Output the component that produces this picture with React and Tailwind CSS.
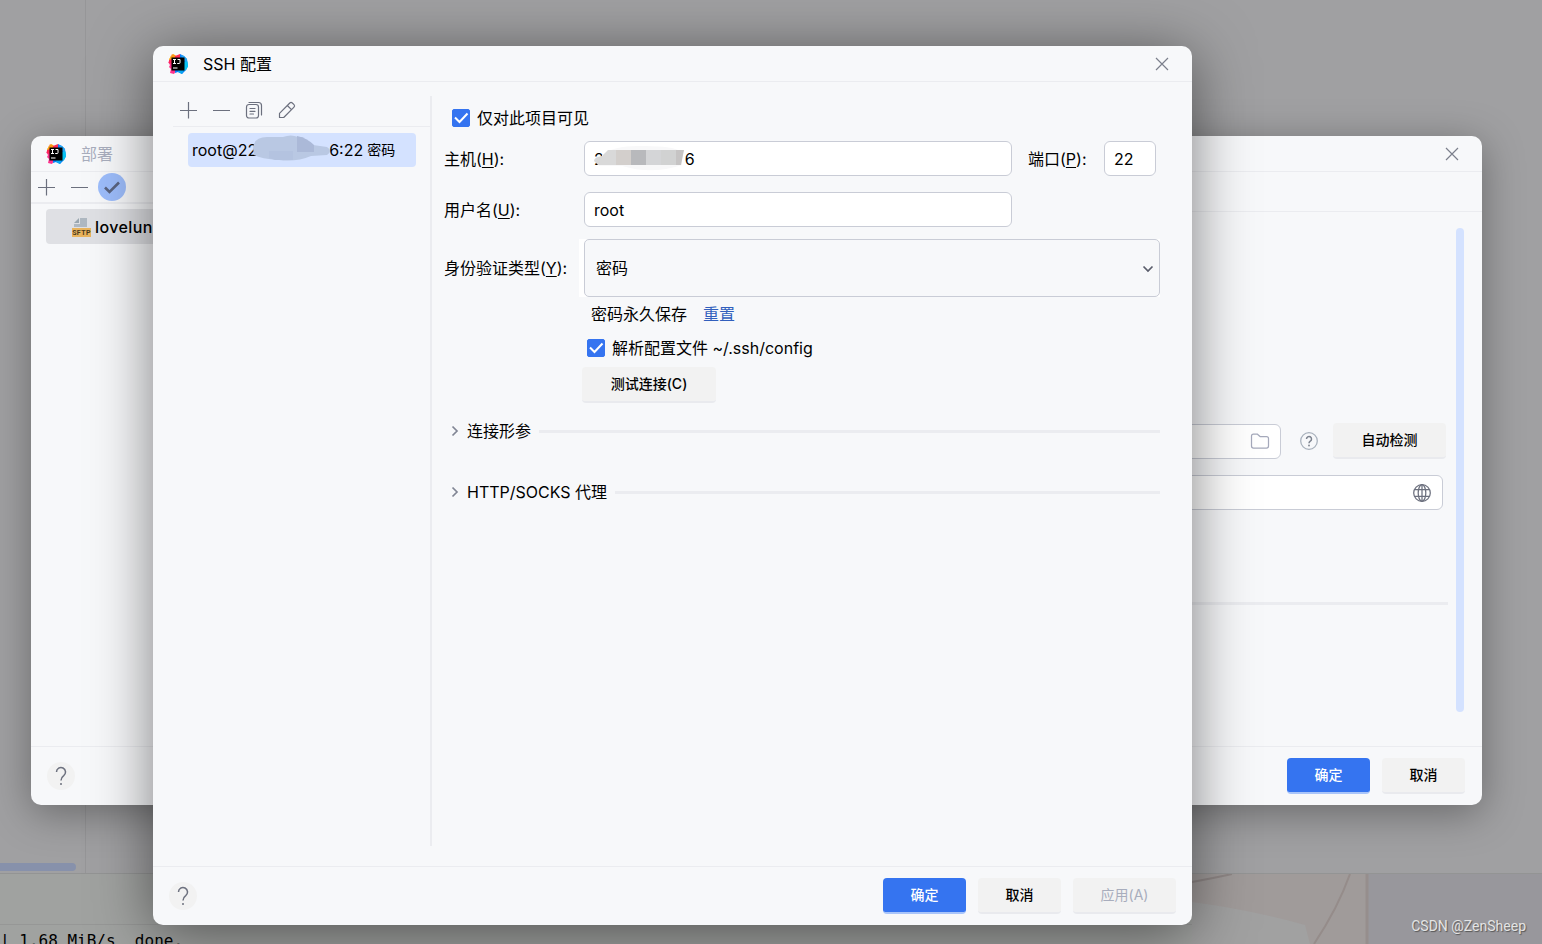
import { useState } from "react";

function IdeaLogo() {
  return (
    <svg viewBox="0 0 20 20" className="h-5 w-5 shrink-0">
      <path d="M1 5 5 0l5 3v6H2Z" fill="#fdb60d" />
      <path d="m4 0 3 1 1 3-4 3-2-4Z" fill="#fc801d" opacity=".6" />
      <path d="m7 2 5-2 2 4-3 3H7Z" fill="#fe2857" />
      <path d="m0 8 4-2 3 8 1 3-2 3-4-1 1-4-2-2 1-2Z" fill="#ff318c" />
      <path d="m1 6 3-1v5l-3-1Z" fill="#fe2857" />
      <path d="m12 0 4 2 3 3 1 7-2 4-4 4-4-2-3 1v-3l5-6Z" fill="#087cfa" />
      <path d="m13 1 3 1 3 3v4l-4-3Z" fill="#21a8f5" />
      <path d="m16 8 3.500-.500.500 5-2 3.500-2 1Z" fill="#07c3f2" />
      <path d="m10 15 6 1-2 4-4-2Z" fill="#07a8f2" />
      <path d="M3.500 3.500h13v13h-13Z" fill="#000" />
      <path d="M5 5.500h3M6.500 5.500v4M5 9.500h3M9.500 5.500h2.500v3.200q0 .8-.8.800H9.200" fill="none" stroke="#fff" />
      <path d="M5 13.500h4.500v1H5Z" fill="#fff" />
    </svg>
  );
}

function PlusIcon() {
  return (
    <svg viewBox="0 0 20 20" className="h-5 w-5" fill="none" stroke="#6c707e" strokeWidth="1.200">
      <path d="M10.500 2v16.500M2 10.500h17" />
    </svg>
  );
}

function MinusIcon() {
  return (
    <svg viewBox="0 0 20 20" className="h-5 w-5" fill="none" stroke="#6c707e" strokeWidth="1.200">
      <path d="M2 10.500h17" />
    </svg>
  );
}

function CopyIcon() {
  return (
    <svg viewBox="0 0 20 20" className="h-5 w-5" fill="none" stroke="#6c707e" strokeWidth="1.200" strokeLinecap="round">
      <rect x="2.500" y="4.500" width="12" height="13.500" rx="2.500" />
      <path d="M5 2.500h9.500a3 3 0 0 1 3 3V15M6 8.500h5M6 11.300h5M6 14h3.500" />
    </svg>
  );
}

function PencilIcon() {
  return (
    <svg viewBox="0 0 20 20" className="h-5 w-5" fill="none" stroke="#6c707e" strokeWidth="1.200" strokeLinejoin="round">
      <path d="M2.500 17.500v-4.200L12.800 3a1.800 1.800 0 0 1 2.500 0l1.700 1.700a1.800 1.800 0 0 1 0 2.500L6.700 17.500ZM10.300 5.500l4.200 4.200" />
    </svg>
  );
}

function CloseIcon() {
  return (
    <svg viewBox="0 0 20 20" className="h-5 w-5" fill="none" stroke="#7b7f8c" strokeWidth="1.200">
      <path d="m4 4 12 12M16 4 4 16" />
    </svg>
  );
}

function SftpIcon() {
  return (
    <svg viewBox="0 0 20 20" className="h-5 w-5 shrink-0">
      <path d="M9 1h7v9H3V7h6Z" fill="#afb8c1" />
      <path d="M8 1v5H3Z" fill="#9aa7b0" />
      <path d="M1 11h19v9H1Z" fill="#e9b35c" />
      <text x="10.500" y="18" fontSize="7" fontWeight="700" textAnchor="middle" fill="#4a3a1c" fontFamily="Roboto, sans-serif">
        SFTP
      </text>
    </svg>
  );
}

function FolderIcon() {
  return (
    <svg viewBox="0 0 20 20" className="h-5 w-5" fill="none" stroke="#a5a9bb" strokeWidth="1.250" strokeLinejoin="round">
      <path d="M1.500 15V5q0-2 2-2h3.700L10 5.500h6.500q2 0 2 2V15q0 2-2 2h-13q-2 0-2-2Z" />
    </svg>
  );
}

function GlobeIcon() {
  return (
    <svg viewBox="0 0 20 20" className="h-5 w-5" fill="none" stroke="#6c707e" strokeWidth="1.250">
      <circle cx="10" cy="10" r="8.300" />
      <ellipse cx="10" cy="10" rx="3.800" ry="8.300" />
      <path d="M10 1.700v16.600M2.500 6.700h15M2.500 13.300h15" />
    </svg>
  );
}

function HelpIcon() {
  return (
    <svg viewBox="0 0 20 20" className="h-5 w-5" fill="none" stroke="#a8b1bc" strokeWidth="1.250">
      <circle cx="10" cy="10" r="8.300" />
      <path d="M7.500 8a2.500 2.500 0 1 1 3.800 2.100Q10 11 10 12.200" stroke="#7d838f" strokeWidth="1.500" />
      <circle cx="10" cy="14.500" r=".9" fill="#7d838f" stroke="none" />
    </svg>
  );
}

function ChevronIcon({ className }) {
  return (
    <svg viewBox="0 0 12 12" className={className} fill="none" strokeWidth="1.700">
      <path d="m3.500 1.500 4.500 4.500-4.500 4.500" />
    </svg>
  );
}

function IconButton({ label, children }) {
  return (
    <button type="button" aria-label={label} className="flex h-5 w-5 items-center justify-center">
      {children}
    </button>
  );
}

function HelpButton() {
  return (
    <button type="button" aria-label="帮助" className="flex h-7 w-7 items-center justify-center rounded-full bg-[#f2f2f2]">
      <svg viewBox="0 0 20 20" className="h-5 w-5" fill="none" stroke="#6c707e" strokeWidth="1.500">
        <path d="M5.500 6a4.500 4.500 0 1 1 7.200 3.600Q10 11.500 10 14.500" />
        <circle cx="10" cy="18" r="1" fill="#6c707e" stroke="none" />
      </svg>
    </button>
  );
}

function Button({ variant = "default", className = "px-6", disabled, children }) {
  const variants = {
    primary: "bg-[#3574f0] text-white font-medium border-[#a9c5fa]",
    default: "bg-[#f2f2f2] text-black font-medium border-[#e9eaee]",
    disabled: "bg-[#f2f2f2] text-[#a8adbd] border-[#e9eaee]",
  };
  return (
    <button
      type="button"
      disabled={disabled}
      className={`h-9 rounded border-b-2 text-sm ${variants[disabled ? "disabled" : variant]} ${className}`}
    >
      {children}
    </button>
  );
}

function Checkbox({ label, checked, onChange }) {
  return (
    <label className="flex items-center gap-[7px]">
      <span className="relative flex h-4.5 w-4.5">
        <input
          type="checkbox"
          checked={checked}
          onChange={(e) => onChange(e.target.checked)}
          className="h-4.5 w-4.5 appearance-none rounded-xs border border-[#c9ccd6] bg-white checked:border-[#3574f0] checked:bg-[#3574f0]"
        />
        {checked && (
          <svg viewBox="0 0 18 18" className="pointer-events-none absolute inset-0" fill="none" stroke="#fff" strokeWidth="2">
            <path d="m3 8.500 4.500 4.500L15.500 4.500" />
          </svg>
        )}
      </span>
      <span>{label}</span>
    </label>
  );
}

function FieldLabel({ htmlFor, text, hotkey, className = "" }) {
  return (
    <label htmlFor={htmlFor} className={className}>
      {text}(<span className="underline underline-offset-2">{hotkey}</span>):
    </label>
  );
}

function TitleBar({ title, muted }) {
  return (
    <header className="flex h-9 shrink-0 items-center border-b border-[#ebecf0] pr-5 pl-[15px]">
      <IdeaLogo />
      <h1 className={muted ? "ml-[15px] grow text-[#a8adbd]" : "ml-[15px] grow"}>{title}</h1>
      <IconButton label="关闭">
        <CloseIcon />
      </IconButton>
    </header>
  );
}

function CollapsedSection({ title }) {
  return (
    <div className="flex h-6 items-center">
      <button type="button" className="flex items-center gap-1.5">
        <ChevronIcon className="h-3 w-3 stroke-[#818594]" />
        <span>{title}</span>
      </button>
      <div className="ml-2 h-[3px] grow bg-[#ebecf0]" />
    </div>
  );
}

function EditorBackdrop() {
  return (
    <div className="flex h-full flex-col">
      <div className="flex grow bg-[#a0a0a2]">
        <div className="flex w-[86px] flex-col justify-end border-r border-[#969698]">
          <div className="mb-0.5 h-2 w-19 rounded-r-full bg-[#8791ab]" />
        </div>
      </div>
      <div className="relative h-[71px] border-t border-[#939494] bg-[#a0a2a0]">
        <svg viewBox="0 0 350 70" className="absolute top-0 right-0 h-[70px] w-[350px]">
          <path d="M0 0h350v70H0Z" fill="#a1a1a1" />
          <path d="M0 0h178v70h-60l-5-19Q60 36 0 28Z" fill="#a09b9a" />
          <path d="M174 0h176v70H174Z" fill="#98979c" />
          <path d="M158 0q-12 34-36 70" fill="none" stroke="#958c8a" strokeWidth="2" />
          <path d="M175 0v70" stroke="#968e8d" strokeWidth="3" />
          <path d="M0 8q22-4 40-8" fill="none" stroke="#8f8786" strokeWidth="2" />
        </svg>
        <div className="h-[51px] border-b border-[#969796]" />
        <pre className="pt-0.5 font-['DejaVu_Sans_Mono',monospace] text-base leading-7 text-black">{"| 1.68 MiB/s  done."}</pre>
      </div>
    </div>
  );
}

function DeploymentWindow() {
  return (
    <section className="absolute top-[136px] right-[60px] bottom-[139px] left-[31px] flex flex-col overflow-hidden rounded-[10px] bg-[#f7f8fa] shadow-[0_8px_40px_rgba(0,0,0,0.35)]">
      <TitleBar title="部署" muted />
      <div className="flex min-h-0 grow">
        <aside className="w-72 shrink-0">
          <div className="flex h-8 items-center gap-[13px] border-b-2 border-[#ebecf0] pl-[5px]">
            <IconButton label="添加">
              <PlusIcon />
            </IconButton>
            <IconButton label="移除">
              <MinusIcon />
            </IconButton>
            <button type="button" aria-label="设为默认" className="-ml-1 flex h-7 w-7 shrink-0 items-center justify-center rounded-full bg-[#9dbdfb]">
              <svg viewBox="0 0 20 20" className="h-5 w-5" fill="none" stroke="#5a6480" strokeWidth="2.600">
                <path d="m3 10.500 4.500 4.500L17 5.500" />
              </svg>
            </button>
          </div>
          <div className="mt-[5px] ml-[15px] flex h-[35px] items-center gap-1 rounded bg-[#dfe0e4] pl-[25px] font-medium tracking-wide">
            <SftpIcon />
            <span>lovelun</span>
          </div>
        </aside>
        <div className="flex min-w-0 grow flex-col">
          <div className="h-10 shrink-0 border-b border-[#ebecf0]" />
          <div className="flex grow pt-4 pr-[18px] pb-[34px]">
            <div className="grow pt-[195px]">
              <div className="flex items-center">
                <div className="flex h-[35px] grow items-center rounded-md border border-[#c9ccd6] bg-white pr-2.5">
                  <input aria-label="根路径" className="min-w-0 grow outline-none" />
                  <IconButton label="浏览">
                    <FolderIcon />
                  </IconButton>
                </div>
                <div className="mr-3.5 ml-[18px] flex">
                  <HelpIcon />
                </div>
                <Button className="mr-2.5 w-[113px]">自动检测</Button>
              </div>
              <div className="mt-4 mr-[13px] flex h-[35px] items-center rounded-md border border-[#c9ccd6] bg-white pr-2.5">
                <input aria-label="Web 服务器 URL" className="min-w-0 grow outline-none" />
                <IconButton label="打开">
                  <GlobeIcon />
                </IconButton>
              </div>
              <div className="mt-[92px] mr-2 h-[3px] bg-[#ebecf0]" />
            </div>
            <div className="w-2 shrink-0 rounded-full bg-[#d4e2ff]" />
          </div>
        </div>
      </div>
      <footer className="flex h-[59px] shrink-0 items-center gap-3 border-t border-[#ebecf0] pr-[17px] pl-4">
        <div className="grow">
          <HelpButton />
        </div>
        <Button variant="primary" className="w-[83px]">确定</Button>
        <Button className="w-[83px]">取消</Button>
      </footer>
    </section>
  );
}

function SshWindow() {
  const [projectOnly, setProjectOnly] = useState(true);
  const [parseConfig, setParseConfig] = useState(true);
  const [host, setHost] = useState("2" + " ".repeat(18) + "6");
  const [port, setPort] = useState("22");
  const [user, setUser] = useState("root");

  return (
    <section className="absolute top-[46px] right-[350px] bottom-[19px] left-[153px] flex flex-col overflow-hidden rounded-[10px] bg-[#f7f8fa] shadow-[0_8px_60px_rgba(0,0,0,0.5)]">
      <TitleBar title="SSH 配置" />
      <div className="flex min-h-0 grow pt-3.5 pb-5">
        <aside className="w-[279px] shrink-0 border-r-2 border-[#ebecf0] pl-5">
          <div className="flex h-[31px] items-center gap-[13px] border-b border-[#ebecf0] pb-0.5 pl-[5px]">
            <IconButton label="添加">
              <PlusIcon />
            </IconButton>
            <IconButton label="移除">
              <MinusIcon />
            </IconButton>
            <IconButton label="复制">
              <CopyIcon />
            </IconButton>
            <IconButton label="编辑">
              <PencilIcon />
            </IconButton>
          </div>
          <div className="mt-1.5 mr-3.5 ml-[15px] flex h-[34px] items-center rounded bg-[#d4e2ff] pl-1">
            <span>root@22</span>
            <svg viewBox="0 0 80 30" className="relative -mr-1 -ml-2 mb-1 h-[30px] w-21">
              <path d="M2 15Q3 4 16 4h16q8-3 15 0h4q6 4 11 8l14 2q6 4 0 8l-16 1q-14 6-32 4Q10 26 3 22Z" fill="#b9c8e3" />
              <path d="M46 3q10 2 17 9v7H46Z" fill="#abb9d8" />
              <path d="M18 18h24v9H24l-6-2Z" fill="#b4c3e0" />
            </svg>
            <span>6:22</span>
            <span className="ml-1 text-sm">密码</span>
          </div>
        </aside>
        <div className="min-w-0 grow pr-8 pl-3">
          <div className="mb-0.5 flex h-[43px] items-center pl-2">
            <Checkbox label="仅对此项目可见" checked={projectOnly} onChange={setProjectOnly} />
          </div>
          <div className="flex items-center">
            <FieldLabel htmlFor="host" text="主机" hotkey="H" className="w-[140px] shrink-0" />
            <div className="relative min-w-0 grow">
              <input
                id="host"
                value={host}
                onChange={(e) => setHost(e.target.value)}
                className="block h-[35px] w-full rounded-md border border-[#c9ccd6] bg-white px-[9px] outline-none"
              />
              <svg viewBox="0 0 92 30" className="pointer-events-none absolute top-0.5 left-2.5 h-[30px] w-[92px]">
                <path d="M8 12Q20 2 50 3q30 0 38 6v13q-30 10-60 1H5Z" fill="#f8f8f9" />
                <path d="M0 18q0-4 8-5l6-6h8v15H4Z" fill="#d9d9d9" />
                <path d="M22 7h15v15H22Z" fill="#d3cfcc" />
                <path d="M37 7h15v15H37Z" fill="#b8b9bc" />
                <path d="M52 7h15v15H52Z" fill="#d4d5d7" />
                <path d="M67 7h15v15H67Z" fill="#d1d2d2" />
                <path d="M82 7h8l-3 15h-5Z" fill="#c6c4c4" />
              </svg>
            </div>
            <FieldLabel htmlFor="port" text="端口" hotkey="P" className="ml-4 w-19 shrink-0" />
            <input
              id="port"
              value={port}
              onChange={(e) => setPort(e.target.value)}
              className="mr-1 h-[35px] w-[52px] shrink-0 rounded-md border border-[#c9ccd6] bg-white px-[9px] outline-none"
            />
          </div>
          <div className="mt-4 mr-[148px] flex items-center">
            <FieldLabel htmlFor="user" text="用户名" hotkey="U" className="w-[140px] shrink-0" />
            <input
              id="user"
              value={user}
              onChange={(e) => setUser(e.target.value)}
              className="h-[35px] min-w-0 grow rounded-md border border-[#c9ccd6] bg-white px-[9px] outline-none"
            />
          </div>
          <div className="mt-3 flex items-center">
            <FieldLabel htmlFor="auth" text="身份验证类型" hotkey="Y" className="w-[135px] shrink-0" />
            <div className="relative min-w-0 grow bg-white pl-[5px]">
              <select id="auth" className="block h-[58px] w-full appearance-none rounded-[5px] border border-[#c9ccd6] bg-[#f7f8fa] px-[11px] outline-none">
                <option>密码</option>
              </select>
              <ChevronIcon className="pointer-events-none absolute top-6 right-1.5 h-3 w-3 rotate-90 stroke-[#5a5d6b]" />
            </div>
          </div>
          <div className="mt-[5px] flex h-6 items-center gap-4 pl-[147px]">
            <span>密码永久保存</span>
            <a href="#reset" className="text-[#315fbd]">重置</a>
          </div>
          <div className="mt-2.5 flex h-6 items-center pl-[143px]">
            <Checkbox label="解析配置文件 ~/.ssh/config" checked={parseConfig} onChange={setParseConfig} />
          </div>
          <div className="mt-[7px] pl-[138px]">
            <Button className="w-[134px]">测试连接(C)</Button>
          </div>
          <div className="mt-4 flex flex-col gap-[37px] pl-[5px]">
            <CollapsedSection title="连接形参" />
            <CollapsedSection title="HTTP/SOCKS 代理" />
          </div>
        </div>
      </div>
      <footer className="flex h-[59px] shrink-0 items-center gap-3 border-t border-[#ebecf0] px-4">
        <div className="grow">
          <HelpButton />
        </div>
        <Button variant="primary" className="w-[83px]">确定</Button>
        <Button className="w-[83px]">取消</Button>
        <Button className="w-[103px]" disabled>应用(A)</Button>
      </footer>
    </section>
  );
}

export default function App() {
  return (
    <div className="relative h-screen overflow-hidden bg-[#a0a0a2] font-['Inter','Noto_Sans_CJK_SC',sans-serif] text-base leading-6 text-black">
      <EditorBackdrop />
      <DeploymentWindow />
      <SshWindow />
      <p className="absolute right-4 bottom-2 font-['Roboto',sans-serif] text-sm leading-5 text-[#e4e4e4] [text-shadow:1px_1px_1px_#555]">
        CSDN @ZenSheep
      </p>
    </div>
  );
}
